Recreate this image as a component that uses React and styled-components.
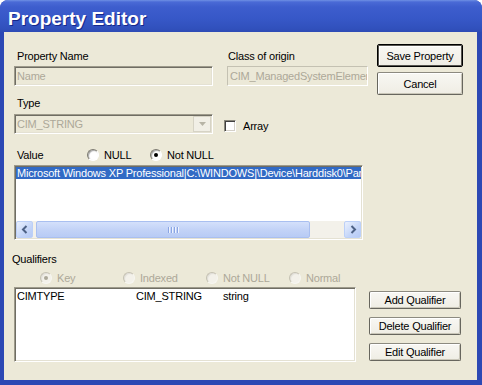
import React from 'react';
import styled, { createGlobalStyle, css } from 'styled-components';

const Global = createGlobalStyle`
  html, body { margin: 0; padding: 0; background: #ffffff; }
  body { font-family: "Liberation Sans", Arial, sans-serif; font-size: 11px; }
  * { box-sizing: border-box; }
`;

const sunken = css`
  border: 1px solid;
  border-color: #9d9a8b #ffffff #ffffff #9d9a8b;
  box-shadow: inset 1px 1px 0 #6f6d63, inset -1px -1px 0 #e4e1d3;
`;

const Window = styled.div`
  width: 482px;
  height: 385px;
  display: flex;
  flex-direction: column;
  border-radius: 8px 8px 0 0;
  overflow: hidden;
  background: #2c48b4;
`;

const TitleBar = styled.div`
  height: 32px;
  flex: none;
  display: flex;
  align-items: center;
  padding: 5px 0 0 8px;
  background: linear-gradient(#6f90e4 0, #4a6ad6 2px, #3d5dcd 7px, #3758c8 18px, #3151bd 28px, #2e4bb5 32px);
`;

const Title = styled.span`
  font: bold 19px "Liberation Sans", Arial, sans-serif;
  color: #ffffff;
  text-shadow: 1px 1px 0 #15288a;
`;

const Client = styled.div`
  flex: 1;
  display: flex;
  flex-direction: column;
  background: #ece9d8;
  border-style: solid;
  border-color: #2c48b4;
  border-width: 0 5px 5px 4px;
  padding: 12px 0 0 10px;
  color: #000;
  font-size: 11px;
  letter-spacing: -0.2px;
`;

const TopSection = styled.div`
  display: flex;
  align-items: flex-start;
`;

const LeftCol = styled.div`
  width: 354px;
  display: flex;
  flex-direction: column;
`;

const FieldRow = styled.div`
  display: flex;
  gap: 14px;
`;

const Field = styled.div`
  width: ${p => p.$w}px;
  display: flex;
  flex-direction: column;
`;

const Label = styled.div`
  height: 13px;
  line-height: 13px;
  padding-left: ${p => p.$pl ?? 3}px;
  margin-top: ${p => p.$mt ?? 0}px;
  margin-left: ${p => p.$ml ?? 0}px;
  white-space: nowrap;
`;

const DisabledInput = styled.div`
  ${sunken};
  ${p => p.$soft && css`
    border-color: #c4c1b2 #ffffff #ffffff #c4c1b2;
    box-shadow: none;
  `}
  margin-top: ${p => p.$mt ?? 3}px;
  height: 20px;
  width: 100%;
  background: #ece9d8;
  color: #aca899;
  padding-left: 2px;
  line-height: 18px;
  white-space: nowrap;
  overflow: hidden;
`;

const TypeBlock = styled.div`
  margin-top: 11px;
  display: flex;
  flex-direction: column;
`;

const ComboRow = styled.div`
  display: flex;
  align-items: center;
  margin-top: 4px;
`;

const Combo = styled.div`
  ${sunken};
  width: 199px;
  height: 20px;
  display: flex;
  padding: 1px;
  background: #ece9d8;
  color: #aca899;
`;

const ComboText = styled.div`
  flex: 1;
  line-height: 16px;
  padding-left: 1px;
`;

const ComboButton = styled.div`
  width: 18px;
  height: 100%;
  border: 1px solid #d6d3c5;
  background: #f1efe6;
  display: flex;
  align-items: center;
  justify-content: center;
`;

const CheckWrap = styled.label`
  display: flex;
  align-items: center;
  gap: 7px;
  margin-left: 11px;
  margin-top: 4px;
  line-height: 13px;
`;

const CheckBox = styled.span`
  width: 12px;
  height: 12px;
  background: #ffffff;
  border: 1px solid;
  border-color: #8a887c #ffffff #ffffff #8a887c;
  box-shadow: inset 1px 1px 0 #404040, inset -1px -1px 0 #d4d0c8;
`;

const ButtonCol = styled.div`
  width: ${p => p.$w}px;
  margin-left: ${p => p.$ml}px;
  margin-top: ${p => p.$mt ?? 0}px;
  display: flex;
  flex-direction: column;
  gap: ${p => p.$gap}px;
`;

const Button = styled.button`
  height: ${p => p.$h}px;
  width: 100%;
  padding: 0;
  font: inherit;
  letter-spacing: inherit;
  color: #000;
  border-radius: 2px;
  border: 1px solid #67665e;
  border-top-color: #8c8a80;
  background: linear-gradient(#f8f7f3, #efede4);
  box-shadow: inset 1px 1px 0 #ffffff, inset -1px -1px 0 #c9c6b8;
  ${p => p.$default && css`
    border-color: #000;
    box-shadow: inset 0 0 0 1px #55544e, inset 2px 2px 0 #ffffff;
  `}
`;

const ValueRow = styled.div`
  display: flex;
  align-items: center;
  height: 14px;
  margin-top: 14px;
`;

const ValueLabel = styled.div`
  width: 73px;
  padding-left: 3px;
  line-height: 13px;
`;

const RadioItem = styled.div`
  width: ${p => p.$w}px;
  display: flex;
  align-items: center;
  gap: 5px;
  line-height: 13px;
  color: ${p => (p.$disabled ? '#aca899' : '#000')};
  white-space: nowrap;
`;

const RadioCircle = styled.span`
  width: 12px;
  height: 12px;
  flex: none;
  border-radius: 50%;
  border: 1px solid;
  border-color: ${p => (p.$disabled ? '#c4c1b2 #f7f6f1 #f7f6f1 #c4c1b2' : '#7c7a70 #ffffff #ffffff #7c7a70')};
  background: ${p => (p.$disabled ? '#f3f1ea' : '#ffffff')};
  box-shadow: inset 1px 1px 1px ${p => (p.$disabled ? 'rgba(0,0,0,0.08)' : 'rgba(0,0,0,0.35)')};
  display: flex;
  align-items: center;
  justify-content: center;
  &::after {
    content: '';
    width: 4px;
    height: 4px;
    border-radius: 50%;
    background: ${p => (p.$disabled ? '#aca899' : '#000')};
    display: ${p => (p.$checked ? 'block' : 'none')};
  }
`;

const ValueBox = styled.div`
  ${sunken};
  margin-top: 3px;
  width: 349px;
  height: 75px;
  padding: 1px;
  background: #ffffff;
  display: flex;
  flex-direction: column;
`;

const SelLine = styled.div`
  height: 13px;
  line-height: 13px;
  white-space: nowrap;
  overflow: hidden;
  flex: none;
`;

const Sel = styled.span`
  background: #316ac5;
  color: #ffffff;
  padding: 0 6px 0 1px;
`;

const Spacer = styled.div`
  flex: 1;
`;

const HScroll = styled.div`
  height: 17px;
  flex: none;
  display: flex;
  background: #f3f1ea;
`;

const ScrollBtn = styled.div`
  width: 17px;
  flex: none;
  border: 1px solid #bcd0f8;
  border-radius: 2px;
  background: linear-gradient(135deg, #eaf0fd, #c4d5f8 60%, #b6caf5);
  display: flex;
  align-items: center;
  justify-content: center;
`;

const Thumb = styled.div`
  width: 274px;
  margin-left: 3px;
  flex: none;
  border: 1px solid #a9bff0;
  border-radius: 2px;
  background: linear-gradient(#d4e0fb, #c3d3f7 50%, #b8cbf5);
  display: flex;
  align-items: center;
  justify-content: center;
  gap: 1px;
`;

const Grip = styled.span`
  width: 1px;
  height: 6px;
  background: #8aa5e4;
  box-shadow: 1px 0 0 #eef3fe;
  margin-right: 1px;
`;

const Track = styled.div`
  flex: 1;
`;

const BottomSection = styled.div`
  display: flex;
  align-items: flex-start;
  margin-top: 2px;
`;

const QualRadios = styled.div`
  display: flex;
  align-items: center;
  height: 14px;
  margin-top: 5px;
  padding-left: 26px;
`;

const List = styled.div`
  ${sunken};
  width: 342px;
  height: 75px;
  padding: 2px;
  background: #ffffff;
`;

const ListRow = styled.div`
  display: grid;
  grid-template-columns: 119px 87px 1fr;
  line-height: 13px;
  white-space: nowrap;
`;

const Arrow = ({ dir }) => (
  <svg width="8" height="9" viewBox="0 0 8 9">
    <path
      d={dir === 'left' ? 'M5.5 1 L2 4.5 L5.5 8' : 'M2.5 1 L6 4.5 L2.5 8'}
      fill="none"
      stroke="#4d6185"
      strokeWidth="2"
    />
  </svg>
);

const DownTri = () => (
  <svg width="7" height="4" viewBox="0 0 7 4">
    <path d="M0 0 H7 L3.5 4 Z" fill="#b7b4a6" />
  </svg>
);

export default function App() {
  return (
    <>
      <Global />
      <Window>
        <TitleBar>
          <Title>Property Editor</Title>
        </TitleBar>
        <Client>
          <TopSection>
            <LeftCol>
              <FieldRow>
                <Field $w={199}>
                  <Label $mt={6}>Property Name</Label>
                  <DisabledInput>Name</DisabledInput>
                </Field>
                <Field $w={141}>
                  <Label $mt={6} $pl={1}>Class of origin</Label>
                  <DisabledInput $soft>CIM_ManagedSystemElement</DisabledInput>
                </Field>
              </FieldRow>
              <TypeBlock>
                <Label>Type</Label>
                <ComboRow>
                  <Combo>
                    <ComboText>CIM_STRING</ComboText>
                    <ComboButton>
                      <DownTri />
                    </ComboButton>
                  </Combo>
                  <CheckWrap>
                    <CheckBox />
                    <span>Array</span>
                  </CheckWrap>
                </ComboRow>
              </TypeBlock>
            </LeftCol>
            <ButtonCol $w={86} $ml={9} $gap={5}>
              <Button $h={23} $default>Save Property</Button>
              <Button $h={23}>Cancel</Button>
            </ButtonCol>
          </TopSection>

          <ValueRow>
            <ValueLabel>Value</ValueLabel>
            <RadioItem $w={63}>
              <RadioCircle />
              <span>NULL</span>
            </RadioItem>
            <RadioItem $w={80}>
              <RadioCircle $checked />
              <span>Not NULL</span>
            </RadioItem>
          </ValueRow>

          <ValueBox>
            <SelLine>
              <Sel>Microsoft Windows XP Professional|C:\WINDOWS|\Device\Harddisk0\Partition1</Sel>
            </SelLine>
            <Spacer />
            <HScroll>
              <ScrollBtn>
                <Arrow dir="left" />
              </ScrollBtn>
              <Thumb>
                <Grip />
                <Grip />
                <Grip />
                <Grip />
              </Thumb>
              <Track />
              <ScrollBtn>
                <Arrow dir="right" />
              </ScrollBtn>
            </HScroll>
          </ValueBox>

          <Label $mt={13} $pl={0} $ml={-2}>Qualifiers</Label>
          <QualRadios>
            <RadioItem $w={83} $disabled>
              <RadioCircle $disabled $checked />
              <span>Key</span>
            </RadioItem>
            <RadioItem $w={83} $disabled>
              <RadioCircle $disabled />
              <span>Indexed</span>
            </RadioItem>
            <RadioItem $w={83} $disabled>
              <RadioCircle $disabled />
              <span>Not NULL</span>
            </RadioItem>
            <RadioItem $w={83} $disabled>
              <RadioCircle $disabled />
              <span>Normal</span>
            </RadioItem>
          </QualRadios>

          <BottomSection>
            <List>
              <ListRow>
                <span>CIMTYPE</span>
                <span>CIM_STRING</span>
                <span>string</span>
              </ListRow>
            </List>
            <ButtonCol $w={92} $ml={13} $mt={4} $gap={8}>
              <Button $h={18}>Add Qualifier</Button>
              <Button $h={18}>Delete Qualifier</Button>
              <Button $h={18}>Edit Qualifier</Button>
            </ButtonCol>
          </BottomSection>
        </Client>
      </Window>
    </>
  );
}
